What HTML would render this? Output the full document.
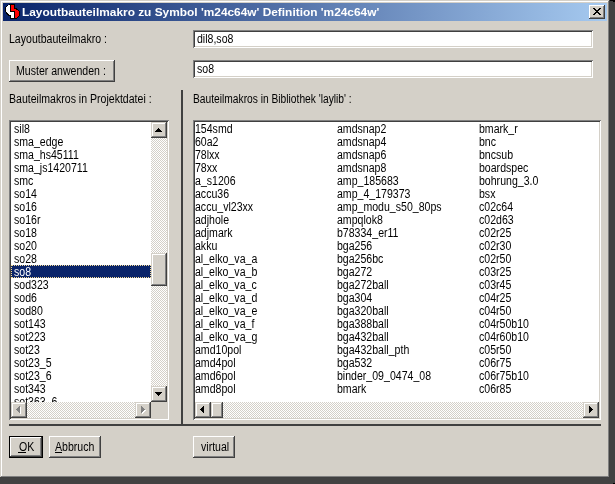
<!DOCTYPE html><html><head><meta charset="utf-8"><style>html,body{margin:0;padding:0;}body{width:615px;height:484px;overflow:hidden;position:relative;background:#424242;}</style></head><body><div style="position:absolute;left:0;top:0;width:610px;height:478px;background:#d4d0c8;box-shadow:inset -1px -1px #404040,inset 1px 1px #d4d0c8,inset -2px -2px #808080,inset 2px 2px #fff;"></div><div style="position:absolute;left:610px;top:0px;width:5px;height:1px;background:#000"></div><div style="position:absolute;left:613px;top:1px;width:2px;height:1px;background:#000"></div><div style="position:absolute;left:613px;top:483px;width:2px;height:1px;background:#000"></div><div style="position:absolute;left:3px;top:3px;width:604px;height:18px;background:linear-gradient(to right,#0a246a,#a6caf0)"></div><svg style="position:absolute;left:4px;top:3px" width="16" height="16" shape-rendering="crispEdges" fill="#000"><rect x="5" y="1" width="6" height="1"/><rect x="3" y="2" width="1" height="1"/><rect x="6" y="2" width="1" height="1"/><rect x="10" y="2" width="1" height="1"/><rect x="2" y="3" width="1" height="1"/><rect x="6" y="3" width="1" height="1"/><rect x="10" y="3" width="1" height="1"/><rect x="1" y="4" width="1" height="1"/><rect x="6" y="4" width="1" height="1"/><rect x="10" y="4" width="1" height="1"/><rect x="1" y="5" width="1" height="1"/><rect x="6" y="5" width="1" height="1"/><rect x="10" y="5" width="3" height="1"/><rect x="1" y="6" width="1" height="1"/><rect x="6" y="6" width="1" height="1"/><rect x="12" y="6" width="2" height="1"/><rect x="1" y="7" width="1" height="1"/><rect x="6" y="7" width="1" height="1"/><rect x="14" y="7" width="1" height="1"/><rect x="1" y="8" width="1" height="1"/><rect x="6" y="8" width="5" height="1"/><rect x="15" y="8" width="1" height="1"/><rect x="2" y="9" width="1" height="1"/><rect x="10" y="9" width="1" height="1"/><rect x="15" y="9" width="1" height="1"/><rect x="2" y="10" width="2" height="1"/><rect x="10" y="10" width="1" height="1"/><rect x="15" y="10" width="1" height="1"/><rect x="3" y="11" width="2" height="1"/><rect x="10" y="11" width="1" height="1"/><rect x="15" y="11" width="1" height="1"/><rect x="4" y="12" width="3" height="1"/><rect x="10" y="12" width="1" height="1"/><rect x="15" y="12" width="1" height="1"/><rect x="6" y="13" width="1" height="1"/><rect x="10" y="13" width="1" height="1"/><rect x="14" y="13" width="1" height="1"/><rect x="6" y="14" width="1" height="1"/><rect x="10" y="14" width="1" height="1"/><rect x="13" y="14" width="1" height="1"/><rect x="6" y="15" width="7" height="1"/></svg><svg style="position:absolute;left:4px;top:3px" width="16" height="16" shape-rendering="crispEdges" fill="#fff"><rect x="4" y="2" width="2" height="1"/><rect x="3" y="3" width="3" height="1"/><rect x="2" y="4" width="4" height="1"/><rect x="2" y="5" width="4" height="1"/><rect x="2" y="6" width="4" height="1"/><rect x="2" y="7" width="4" height="1"/><rect x="2" y="8" width="4" height="1"/><rect x="3" y="9" width="7" height="1"/><rect x="4" y="10" width="6" height="1"/><rect x="5" y="11" width="5" height="1"/><rect x="7" y="12" width="3" height="1"/><rect x="7" y="13" width="3" height="1"/><rect x="7" y="14" width="3" height="1"/></svg><svg style="position:absolute;left:4px;top:3px" width="16" height="16" shape-rendering="crispEdges" fill="#f00"><rect x="7" y="2" width="3" height="1"/><rect x="7" y="3" width="3" height="1"/><rect x="7" y="4" width="3" height="1"/><rect x="7" y="5" width="3" height="1"/><rect x="7" y="6" width="5" height="1"/><rect x="7" y="7" width="7" height="1"/><rect x="11" y="8" width="4" height="1"/><rect x="11" y="9" width="4" height="1"/><rect x="11" y="10" width="4" height="1"/><rect x="11" y="11" width="4" height="1"/><rect x="11" y="12" width="4" height="1"/><rect x="11" y="13" width="3" height="1"/><rect x="11" y="14" width="2" height="1"/></svg><div style="position:absolute;left:22px;top:4.69px;font:bold 11px/15px 'Liberation Sans', sans-serif;color:#fff;letter-spacing:0px;white-space:pre;transform:scaleX(1.08);transform-origin:0 0;filter:grayscale(1);">Layoutbauteilmakro zu Symbol 'm24c64w' Definition 'm24c64w'</div><div style="position:absolute;left:589px;top:5px;width:16px;height:14px;background:#d4d0c8;box-shadow:inset -1px -1px #404040,inset 1px 1px #fff,inset -2px -2px #808080,inset 2px 2px #d4d0c8;"></div><svg style="position:absolute;left:593px;top:8px" width="8" height="7" shape-rendering="crispEdges" fill="#000"><rect x="0" y="0" width="1" height="1"/><rect x="1" y="0" width="1" height="1"/><rect x="6" y="0" width="1" height="1"/><rect x="7" y="0" width="1" height="1"/><rect x="1" y="1" width="1" height="1"/><rect x="2" y="1" width="1" height="1"/><rect x="5" y="1" width="1" height="1"/><rect x="6" y="1" width="1" height="1"/><rect x="2" y="2" width="1" height="1"/><rect x="3" y="2" width="1" height="1"/><rect x="4" y="2" width="1" height="1"/><rect x="5" y="2" width="1" height="1"/><rect x="3" y="3" width="1" height="1"/><rect x="4" y="3" width="1" height="1"/><rect x="2" y="4" width="1" height="1"/><rect x="3" y="4" width="1" height="1"/><rect x="4" y="4" width="1" height="1"/><rect x="5" y="4" width="1" height="1"/><rect x="1" y="5" width="1" height="1"/><rect x="2" y="5" width="1" height="1"/><rect x="5" y="5" width="1" height="1"/><rect x="6" y="5" width="1" height="1"/><rect x="0" y="6" width="1" height="1"/><rect x="1" y="6" width="1" height="1"/><rect x="6" y="6" width="1" height="1"/><rect x="7" y="6" width="1" height="1"/></svg><div style="position:absolute;left:9px;top:32.34px;font:normal 12px/15px 'Liberation Sans', sans-serif;color:#000;letter-spacing:0px;white-space:pre;transform:scaleX(0.88);transform-origin:0 0;filter:grayscale(1);">Layoutbauteilmakro :</div><div style="position:absolute;left:193px;top:30px;width:400px;height:18px;background:#fff;box-shadow:inset 1px 1px #808080,inset -1px -1px #fff,inset 2px 2px #404040,inset -2px -2px #d4d0c8;"></div><div style="position:absolute;left:197px;top:32.34px;font:normal 12px/15px 'Liberation Sans', sans-serif;color:#000;letter-spacing:0px;white-space:pre;transform:scaleX(0.88);transform-origin:0 0;filter:grayscale(1);">dil8,so8</div><div style="position:absolute;left:9px;top:60px;width:106px;height:22px;background:#d4d0c8;box-shadow:inset -1px -1px #404040,inset 1px 1px #fff,inset -2px -2px #808080,inset 2px 2px #d4d0c8;"></div><div style="position:absolute;left:16px;top:64.34px;font:normal 12px/15px 'Liberation Sans', sans-serif;color:#000;letter-spacing:0px;white-space:pre;transform:scaleX(0.88);transform-origin:0 0;filter:grayscale(1);">Muster anwenden :</div><div style="position:absolute;left:193px;top:60px;width:400px;height:18px;background:#fff;box-shadow:inset 1px 1px #808080,inset -1px -1px #fff,inset 2px 2px #404040,inset -2px -2px #d4d0c8;"></div><div style="position:absolute;left:197px;top:62.34px;font:normal 12px/15px 'Liberation Sans', sans-serif;color:#000;letter-spacing:0px;white-space:pre;transform:scaleX(0.88);transform-origin:0 0;filter:grayscale(1);">so8</div><div style="position:absolute;left:9px;top:92.34px;font:normal 12px/15px 'Liberation Sans', sans-serif;color:#000;letter-spacing:0px;white-space:pre;transform:scaleX(0.88);transform-origin:0 0;filter:grayscale(1);">Bauteilmakros in Projektdatei :</div><div style="position:absolute;left:193px;top:92.34px;font:normal 12px/15px 'Liberation Sans', sans-serif;color:#000;letter-spacing:0px;white-space:pre;transform:scaleX(0.853);transform-origin:0 0;filter:grayscale(1);">Bauteilmakros in Bibliothek 'laylib' :</div><div style="position:absolute;left:181px;top:90px;width:2px;height:336px;background:#404040"></div><div style="position:absolute;left:9px;top:424px;width:592px;height:2px;background:#404040"></div><div style="position:absolute;left:9px;top:120px;width:160px;height:300px;background:#fff;box-shadow:inset 1px 1px #808080,inset -1px -1px #fff,inset 2px 2px #404040,inset -2px -2px #d4d0c8;"></div><div style="position:absolute;left:11px;top:122px;width:140px;height:280px;overflow:hidden;"><div style="position:absolute;left:3px;top:0.34px;font:normal 12px/15px 'Liberation Sans', sans-serif;color:#000;letter-spacing:0px;white-space:pre;transform:scaleX(0.88);transform-origin:0 0;filter:grayscale(1);">sil8</div><div style="position:absolute;left:3px;top:13.34px;font:normal 12px/15px 'Liberation Sans', sans-serif;color:#000;letter-spacing:0px;white-space:pre;transform:scaleX(0.88);transform-origin:0 0;filter:grayscale(1);">sma<span style="position:relative;top:-1px">_</span>edge</div><div style="position:absolute;left:3px;top:26.34px;font:normal 12px/15px 'Liberation Sans', sans-serif;color:#000;letter-spacing:0px;white-space:pre;transform:scaleX(0.88);transform-origin:0 0;filter:grayscale(1);">sma<span style="position:relative;top:-1px">_</span>hs45111</div><div style="position:absolute;left:3px;top:39.34px;font:normal 12px/15px 'Liberation Sans', sans-serif;color:#000;letter-spacing:0px;white-space:pre;transform:scaleX(0.88);transform-origin:0 0;filter:grayscale(1);">sma<span style="position:relative;top:-1px">_</span>js1420711</div><div style="position:absolute;left:3px;top:52.34px;font:normal 12px/15px 'Liberation Sans', sans-serif;color:#000;letter-spacing:0px;white-space:pre;transform:scaleX(0.88);transform-origin:0 0;filter:grayscale(1);">smc</div><div style="position:absolute;left:3px;top:65.34px;font:normal 12px/15px 'Liberation Sans', sans-serif;color:#000;letter-spacing:0px;white-space:pre;transform:scaleX(0.88);transform-origin:0 0;filter:grayscale(1);">so14</div><div style="position:absolute;left:3px;top:78.34px;font:normal 12px/15px 'Liberation Sans', sans-serif;color:#000;letter-spacing:0px;white-space:pre;transform:scaleX(0.88);transform-origin:0 0;filter:grayscale(1);">so16</div><div style="position:absolute;left:3px;top:91.34px;font:normal 12px/15px 'Liberation Sans', sans-serif;color:#000;letter-spacing:0px;white-space:pre;transform:scaleX(0.88);transform-origin:0 0;filter:grayscale(1);">so16r</div><div style="position:absolute;left:3px;top:104.34px;font:normal 12px/15px 'Liberation Sans', sans-serif;color:#000;letter-spacing:0px;white-space:pre;transform:scaleX(0.88);transform-origin:0 0;filter:grayscale(1);">so18</div><div style="position:absolute;left:3px;top:117.34px;font:normal 12px/15px 'Liberation Sans', sans-serif;color:#000;letter-spacing:0px;white-space:pre;transform:scaleX(0.88);transform-origin:0 0;filter:grayscale(1);">so20</div><div style="position:absolute;left:3px;top:130.34px;font:normal 12px/15px 'Liberation Sans', sans-serif;color:#000;letter-spacing:0px;white-space:pre;transform:scaleX(0.88);transform-origin:0 0;filter:grayscale(1);">so28</div><div style="position:absolute;left:0;top:143px;width:140px;height:13px;background:#0a246a;"></div><div style="position:absolute;left:0;top:143px;width:138px;height:11px;border:1px dotted #f5db95;"></div><div style="position:absolute;left:3px;top:143.34px;font:normal 12px/15px 'Liberation Sans', sans-serif;color:#fff;letter-spacing:0px;white-space:pre;transform:scaleX(0.88);transform-origin:0 0;filter:grayscale(1);">so8</div><div style="position:absolute;left:3px;top:156.34px;font:normal 12px/15px 'Liberation Sans', sans-serif;color:#000;letter-spacing:0px;white-space:pre;transform:scaleX(0.88);transform-origin:0 0;filter:grayscale(1);">sod323</div><div style="position:absolute;left:3px;top:169.34px;font:normal 12px/15px 'Liberation Sans', sans-serif;color:#000;letter-spacing:0px;white-space:pre;transform:scaleX(0.88);transform-origin:0 0;filter:grayscale(1);">sod6</div><div style="position:absolute;left:3px;top:182.34px;font:normal 12px/15px 'Liberation Sans', sans-serif;color:#000;letter-spacing:0px;white-space:pre;transform:scaleX(0.88);transform-origin:0 0;filter:grayscale(1);">sod80</div><div style="position:absolute;left:3px;top:195.34px;font:normal 12px/15px 'Liberation Sans', sans-serif;color:#000;letter-spacing:0px;white-space:pre;transform:scaleX(0.88);transform-origin:0 0;filter:grayscale(1);">sot143</div><div style="position:absolute;left:3px;top:208.34px;font:normal 12px/15px 'Liberation Sans', sans-serif;color:#000;letter-spacing:0px;white-space:pre;transform:scaleX(0.88);transform-origin:0 0;filter:grayscale(1);">sot223</div><div style="position:absolute;left:3px;top:221.34px;font:normal 12px/15px 'Liberation Sans', sans-serif;color:#000;letter-spacing:0px;white-space:pre;transform:scaleX(0.88);transform-origin:0 0;filter:grayscale(1);">sot23</div><div style="position:absolute;left:3px;top:234.34px;font:normal 12px/15px 'Liberation Sans', sans-serif;color:#000;letter-spacing:0px;white-space:pre;transform:scaleX(0.88);transform-origin:0 0;filter:grayscale(1);">sot23<span style="position:relative;top:-1px">_</span>5</div><div style="position:absolute;left:3px;top:247.34px;font:normal 12px/15px 'Liberation Sans', sans-serif;color:#000;letter-spacing:0px;white-space:pre;transform:scaleX(0.88);transform-origin:0 0;filter:grayscale(1);">sot23<span style="position:relative;top:-1px">_</span>6</div><div style="position:absolute;left:3px;top:260.34px;font:normal 12px/15px 'Liberation Sans', sans-serif;color:#000;letter-spacing:0px;white-space:pre;transform:scaleX(0.88);transform-origin:0 0;filter:grayscale(1);">sot343</div><div style="position:absolute;left:3px;top:273.34px;font:normal 12px/15px 'Liberation Sans', sans-serif;color:#000;letter-spacing:0px;white-space:pre;transform:scaleX(0.88);transform-origin:0 0;filter:grayscale(1);">sot363<span style="position:relative;top:-1px">_</span>6</div></div><div style="position:absolute;left:151px;top:138px;width:16px;height:248px;background-color:#fff;background-image:repeating-conic-gradient(#d4d0c8 0 25%,#fff 0 50%);background-size:2px 2px;"></div><div style="position:absolute;left:151px;top:122px;width:16px;height:16px;background:#d4d0c8;box-shadow:inset -1px -1px #404040,inset 1px 1px #d4d0c8,inset -2px -2px #808080,inset 2px 2px #fff;"></div><svg style="position:absolute;left:155px;top:128px" width="7" height="4" shape-rendering="crispEdges" fill="#000"><rect x="3" y="0" width="1" height="1"/><rect x="2" y="1" width="3" height="1"/><rect x="1" y="2" width="5" height="1"/><rect x="0" y="3" width="7" height="1"/></svg><div style="position:absolute;left:151px;top:253px;width:16px;height:33px;background:#d4d0c8;box-shadow:inset -1px -1px #404040,inset 1px 1px #d4d0c8,inset -2px -2px #808080,inset 2px 2px #fff;"></div><div style="position:absolute;left:151px;top:386px;width:16px;height:16px;background:#d4d0c8;box-shadow:inset -1px -1px #404040,inset 1px 1px #d4d0c8,inset -2px -2px #808080,inset 2px 2px #fff;"></div><svg style="position:absolute;left:155px;top:392px" width="7" height="4" shape-rendering="crispEdges" fill="#000"><rect x="0" y="0" width="7" height="1"/><rect x="1" y="1" width="5" height="1"/><rect x="2" y="2" width="3" height="1"/><rect x="3" y="3" width="1" height="1"/></svg><div style="position:absolute;left:27px;top:402px;width:108px;height:16px;background-color:#fff;background-image:repeating-conic-gradient(#d4d0c8 0 25%,#fff 0 50%);background-size:2px 2px;"></div><div style="position:absolute;left:11px;top:402px;width:16px;height:16px;background:#d4d0c8;box-shadow:inset -1px -1px #404040,inset 1px 1px #d4d0c8,inset -2px -2px #808080,inset 2px 2px #fff;"></div><svg style="position:absolute;left:17px;top:407px" width="4" height="7" shape-rendering="crispEdges" fill="#fff"><rect x="0" y="3" width="1" height="1"/><rect x="1" y="2" width="1" height="3"/><rect x="2" y="1" width="1" height="5"/><rect x="3" y="0" width="1" height="7"/></svg><svg style="position:absolute;left:16px;top:406px" width="4" height="7" shape-rendering="crispEdges" fill="#808080"><rect x="0" y="3" width="1" height="1"/><rect x="1" y="2" width="1" height="3"/><rect x="2" y="1" width="1" height="5"/><rect x="3" y="0" width="1" height="7"/></svg><div style="position:absolute;left:135px;top:402px;width:16px;height:16px;background:#d4d0c8;box-shadow:inset -1px -1px #404040,inset 1px 1px #d4d0c8,inset -2px -2px #808080,inset 2px 2px #fff;"></div><svg style="position:absolute;left:142px;top:407px" width="4" height="7" shape-rendering="crispEdges" fill="#fff"><rect x="0" y="0" width="1" height="7"/><rect x="1" y="1" width="1" height="5"/><rect x="2" y="2" width="1" height="3"/><rect x="3" y="3" width="1" height="1"/></svg><svg style="position:absolute;left:141px;top:406px" width="4" height="7" shape-rendering="crispEdges" fill="#808080"><rect x="0" y="0" width="1" height="7"/><rect x="1" y="1" width="1" height="5"/><rect x="2" y="2" width="1" height="3"/><rect x="3" y="3" width="1" height="1"/></svg><div style="position:absolute;left:151px;top:402px;width:16px;height:16px;background:#d4d0c8"></div><div style="position:absolute;left:193px;top:120px;width:408px;height:300px;background:#fff;box-shadow:inset 1px 1px #808080,inset -1px -1px #fff,inset 2px 2px #404040,inset -2px -2px #d4d0c8;"></div><div style="position:absolute;left:195px;top:122px;width:404px;height:280px;overflow:hidden;"><div style="position:absolute;left:0px;top:0.34px;font:normal 12px/15px 'Liberation Sans', sans-serif;color:#000;letter-spacing:0px;white-space:pre;transform:scaleX(0.88);transform-origin:0 0;filter:grayscale(1);">154smd</div><div style="position:absolute;left:0px;top:13.34px;font:normal 12px/15px 'Liberation Sans', sans-serif;color:#000;letter-spacing:0px;white-space:pre;transform:scaleX(0.88);transform-origin:0 0;filter:grayscale(1);">60a2</div><div style="position:absolute;left:0px;top:26.34px;font:normal 12px/15px 'Liberation Sans', sans-serif;color:#000;letter-spacing:0px;white-space:pre;transform:scaleX(0.88);transform-origin:0 0;filter:grayscale(1);">78lxx</div><div style="position:absolute;left:0px;top:39.34px;font:normal 12px/15px 'Liberation Sans', sans-serif;color:#000;letter-spacing:0px;white-space:pre;transform:scaleX(0.88);transform-origin:0 0;filter:grayscale(1);">78xx</div><div style="position:absolute;left:0px;top:52.34px;font:normal 12px/15px 'Liberation Sans', sans-serif;color:#000;letter-spacing:0px;white-space:pre;transform:scaleX(0.88);transform-origin:0 0;filter:grayscale(1);">a<span style="position:relative;top:-1px">_</span>s1206</div><div style="position:absolute;left:0px;top:65.34px;font:normal 12px/15px 'Liberation Sans', sans-serif;color:#000;letter-spacing:0px;white-space:pre;transform:scaleX(0.88);transform-origin:0 0;filter:grayscale(1);">accu36</div><div style="position:absolute;left:0px;top:78.34px;font:normal 12px/15px 'Liberation Sans', sans-serif;color:#000;letter-spacing:0px;white-space:pre;transform:scaleX(0.88);transform-origin:0 0;filter:grayscale(1);">accu<span style="position:relative;top:-1px">_</span>vl23xx</div><div style="position:absolute;left:0px;top:91.34px;font:normal 12px/15px 'Liberation Sans', sans-serif;color:#000;letter-spacing:0px;white-space:pre;transform:scaleX(0.88);transform-origin:0 0;filter:grayscale(1);">adjhole</div><div style="position:absolute;left:0px;top:104.34px;font:normal 12px/15px 'Liberation Sans', sans-serif;color:#000;letter-spacing:0px;white-space:pre;transform:scaleX(0.88);transform-origin:0 0;filter:grayscale(1);">adjmark</div><div style="position:absolute;left:0px;top:117.34px;font:normal 12px/15px 'Liberation Sans', sans-serif;color:#000;letter-spacing:0px;white-space:pre;transform:scaleX(0.88);transform-origin:0 0;filter:grayscale(1);">akku</div><div style="position:absolute;left:0px;top:130.34px;font:normal 12px/15px 'Liberation Sans', sans-serif;color:#000;letter-spacing:0px;white-space:pre;transform:scaleX(0.88);transform-origin:0 0;filter:grayscale(1);">al<span style="position:relative;top:-1px">_</span>elko<span style="position:relative;top:-1px">_</span>va<span style="position:relative;top:-1px">_</span>a</div><div style="position:absolute;left:0px;top:143.34px;font:normal 12px/15px 'Liberation Sans', sans-serif;color:#000;letter-spacing:0px;white-space:pre;transform:scaleX(0.88);transform-origin:0 0;filter:grayscale(1);">al<span style="position:relative;top:-1px">_</span>elko<span style="position:relative;top:-1px">_</span>va<span style="position:relative;top:-1px">_</span>b</div><div style="position:absolute;left:0px;top:156.34px;font:normal 12px/15px 'Liberation Sans', sans-serif;color:#000;letter-spacing:0px;white-space:pre;transform:scaleX(0.88);transform-origin:0 0;filter:grayscale(1);">al<span style="position:relative;top:-1px">_</span>elko<span style="position:relative;top:-1px">_</span>va<span style="position:relative;top:-1px">_</span>c</div><div style="position:absolute;left:0px;top:169.34px;font:normal 12px/15px 'Liberation Sans', sans-serif;color:#000;letter-spacing:0px;white-space:pre;transform:scaleX(0.88);transform-origin:0 0;filter:grayscale(1);">al<span style="position:relative;top:-1px">_</span>elko<span style="position:relative;top:-1px">_</span>va<span style="position:relative;top:-1px">_</span>d</div><div style="position:absolute;left:0px;top:182.34px;font:normal 12px/15px 'Liberation Sans', sans-serif;color:#000;letter-spacing:0px;white-space:pre;transform:scaleX(0.88);transform-origin:0 0;filter:grayscale(1);">al<span style="position:relative;top:-1px">_</span>elko<span style="position:relative;top:-1px">_</span>va<span style="position:relative;top:-1px">_</span>e</div><div style="position:absolute;left:0px;top:195.34px;font:normal 12px/15px 'Liberation Sans', sans-serif;color:#000;letter-spacing:0px;white-space:pre;transform:scaleX(0.88);transform-origin:0 0;filter:grayscale(1);">al<span style="position:relative;top:-1px">_</span>elko<span style="position:relative;top:-1px">_</span>va<span style="position:relative;top:-1px">_</span>f</div><div style="position:absolute;left:0px;top:208.34px;font:normal 12px/15px 'Liberation Sans', sans-serif;color:#000;letter-spacing:0px;white-space:pre;transform:scaleX(0.88);transform-origin:0 0;filter:grayscale(1);">al<span style="position:relative;top:-1px">_</span>elko<span style="position:relative;top:-1px">_</span>va<span style="position:relative;top:-1px">_</span>g</div><div style="position:absolute;left:0px;top:221.34px;font:normal 12px/15px 'Liberation Sans', sans-serif;color:#000;letter-spacing:0px;white-space:pre;transform:scaleX(0.88);transform-origin:0 0;filter:grayscale(1);">amd10pol</div><div style="position:absolute;left:0px;top:234.34px;font:normal 12px/15px 'Liberation Sans', sans-serif;color:#000;letter-spacing:0px;white-space:pre;transform:scaleX(0.88);transform-origin:0 0;filter:grayscale(1);">amd4pol</div><div style="position:absolute;left:0px;top:247.34px;font:normal 12px/15px 'Liberation Sans', sans-serif;color:#000;letter-spacing:0px;white-space:pre;transform:scaleX(0.88);transform-origin:0 0;filter:grayscale(1);">amd6pol</div><div style="position:absolute;left:0px;top:260.34px;font:normal 12px/15px 'Liberation Sans', sans-serif;color:#000;letter-spacing:0px;white-space:pre;transform:scaleX(0.88);transform-origin:0 0;filter:grayscale(1);">amd8pol</div><div style="position:absolute;left:142px;top:0.34px;font:normal 12px/15px 'Liberation Sans', sans-serif;color:#000;letter-spacing:0px;white-space:pre;transform:scaleX(0.88);transform-origin:0 0;filter:grayscale(1);">amdsnap2</div><div style="position:absolute;left:142px;top:13.34px;font:normal 12px/15px 'Liberation Sans', sans-serif;color:#000;letter-spacing:0px;white-space:pre;transform:scaleX(0.88);transform-origin:0 0;filter:grayscale(1);">amdsnap4</div><div style="position:absolute;left:142px;top:26.34px;font:normal 12px/15px 'Liberation Sans', sans-serif;color:#000;letter-spacing:0px;white-space:pre;transform:scaleX(0.88);transform-origin:0 0;filter:grayscale(1);">amdsnap6</div><div style="position:absolute;left:142px;top:39.34px;font:normal 12px/15px 'Liberation Sans', sans-serif;color:#000;letter-spacing:0px;white-space:pre;transform:scaleX(0.88);transform-origin:0 0;filter:grayscale(1);">amdsnap8</div><div style="position:absolute;left:142px;top:52.34px;font:normal 12px/15px 'Liberation Sans', sans-serif;color:#000;letter-spacing:0px;white-space:pre;transform:scaleX(0.88);transform-origin:0 0;filter:grayscale(1);">amp<span style="position:relative;top:-1px">_</span>185683</div><div style="position:absolute;left:142px;top:65.34px;font:normal 12px/15px 'Liberation Sans', sans-serif;color:#000;letter-spacing:0px;white-space:pre;transform:scaleX(0.88);transform-origin:0 0;filter:grayscale(1);">amp<span style="position:relative;top:-1px">_</span>4<span style="position:relative;top:-1px">_</span>179373</div><div style="position:absolute;left:142px;top:78.34px;font:normal 12px/15px 'Liberation Sans', sans-serif;color:#000;letter-spacing:0px;white-space:pre;transform:scaleX(0.88);transform-origin:0 0;filter:grayscale(1);">amp<span style="position:relative;top:-1px">_</span>modu<span style="position:relative;top:-1px">_</span>s50<span style="position:relative;top:-1px">_</span>80ps</div><div style="position:absolute;left:142px;top:91.34px;font:normal 12px/15px 'Liberation Sans', sans-serif;color:#000;letter-spacing:0px;white-space:pre;transform:scaleX(0.88);transform-origin:0 0;filter:grayscale(1);">ampqlok8</div><div style="position:absolute;left:142px;top:104.34px;font:normal 12px/15px 'Liberation Sans', sans-serif;color:#000;letter-spacing:0px;white-space:pre;transform:scaleX(0.88);transform-origin:0 0;filter:grayscale(1);">b78334<span style="position:relative;top:-1px">_</span>er11</div><div style="position:absolute;left:142px;top:117.34px;font:normal 12px/15px 'Liberation Sans', sans-serif;color:#000;letter-spacing:0px;white-space:pre;transform:scaleX(0.88);transform-origin:0 0;filter:grayscale(1);">bga256</div><div style="position:absolute;left:142px;top:130.34px;font:normal 12px/15px 'Liberation Sans', sans-serif;color:#000;letter-spacing:0px;white-space:pre;transform:scaleX(0.88);transform-origin:0 0;filter:grayscale(1);">bga256bc</div><div style="position:absolute;left:142px;top:143.34px;font:normal 12px/15px 'Liberation Sans', sans-serif;color:#000;letter-spacing:0px;white-space:pre;transform:scaleX(0.88);transform-origin:0 0;filter:grayscale(1);">bga272</div><div style="position:absolute;left:142px;top:156.34px;font:normal 12px/15px 'Liberation Sans', sans-serif;color:#000;letter-spacing:0px;white-space:pre;transform:scaleX(0.88);transform-origin:0 0;filter:grayscale(1);">bga272ball</div><div style="position:absolute;left:142px;top:169.34px;font:normal 12px/15px 'Liberation Sans', sans-serif;color:#000;letter-spacing:0px;white-space:pre;transform:scaleX(0.88);transform-origin:0 0;filter:grayscale(1);">bga304</div><div style="position:absolute;left:142px;top:182.34px;font:normal 12px/15px 'Liberation Sans', sans-serif;color:#000;letter-spacing:0px;white-space:pre;transform:scaleX(0.88);transform-origin:0 0;filter:grayscale(1);">bga320ball</div><div style="position:absolute;left:142px;top:195.34px;font:normal 12px/15px 'Liberation Sans', sans-serif;color:#000;letter-spacing:0px;white-space:pre;transform:scaleX(0.88);transform-origin:0 0;filter:grayscale(1);">bga388ball</div><div style="position:absolute;left:142px;top:208.34px;font:normal 12px/15px 'Liberation Sans', sans-serif;color:#000;letter-spacing:0px;white-space:pre;transform:scaleX(0.88);transform-origin:0 0;filter:grayscale(1);">bga432ball</div><div style="position:absolute;left:142px;top:221.34px;font:normal 12px/15px 'Liberation Sans', sans-serif;color:#000;letter-spacing:0px;white-space:pre;transform:scaleX(0.88);transform-origin:0 0;filter:grayscale(1);">bga432ball<span style="position:relative;top:-1px">_</span>pth</div><div style="position:absolute;left:142px;top:234.34px;font:normal 12px/15px 'Liberation Sans', sans-serif;color:#000;letter-spacing:0px;white-space:pre;transform:scaleX(0.88);transform-origin:0 0;filter:grayscale(1);">bga532</div><div style="position:absolute;left:142px;top:247.34px;font:normal 12px/15px 'Liberation Sans', sans-serif;color:#000;letter-spacing:0px;white-space:pre;transform:scaleX(0.88);transform-origin:0 0;filter:grayscale(1);">binder<span style="position:relative;top:-1px">_</span>09<span style="position:relative;top:-1px">_</span>0474<span style="position:relative;top:-1px">_</span>08</div><div style="position:absolute;left:142px;top:260.34px;font:normal 12px/15px 'Liberation Sans', sans-serif;color:#000;letter-spacing:0px;white-space:pre;transform:scaleX(0.88);transform-origin:0 0;filter:grayscale(1);">bmark</div><div style="position:absolute;left:284px;top:0.34px;font:normal 12px/15px 'Liberation Sans', sans-serif;color:#000;letter-spacing:0px;white-space:pre;transform:scaleX(0.88);transform-origin:0 0;filter:grayscale(1);">bmark<span style="position:relative;top:-1px">_</span>r</div><div style="position:absolute;left:284px;top:13.34px;font:normal 12px/15px 'Liberation Sans', sans-serif;color:#000;letter-spacing:0px;white-space:pre;transform:scaleX(0.88);transform-origin:0 0;filter:grayscale(1);">bnc</div><div style="position:absolute;left:284px;top:26.34px;font:normal 12px/15px 'Liberation Sans', sans-serif;color:#000;letter-spacing:0px;white-space:pre;transform:scaleX(0.88);transform-origin:0 0;filter:grayscale(1);">bncsub</div><div style="position:absolute;left:284px;top:39.34px;font:normal 12px/15px 'Liberation Sans', sans-serif;color:#000;letter-spacing:0px;white-space:pre;transform:scaleX(0.88);transform-origin:0 0;filter:grayscale(1);">boardspec</div><div style="position:absolute;left:284px;top:52.34px;font:normal 12px/15px 'Liberation Sans', sans-serif;color:#000;letter-spacing:0px;white-space:pre;transform:scaleX(0.88);transform-origin:0 0;filter:grayscale(1);">bohrung<span style="position:relative;top:-1px">_</span>3.0</div><div style="position:absolute;left:284px;top:65.34px;font:normal 12px/15px 'Liberation Sans', sans-serif;color:#000;letter-spacing:0px;white-space:pre;transform:scaleX(0.88);transform-origin:0 0;filter:grayscale(1);">bsx</div><div style="position:absolute;left:284px;top:78.34px;font:normal 12px/15px 'Liberation Sans', sans-serif;color:#000;letter-spacing:0px;white-space:pre;transform:scaleX(0.88);transform-origin:0 0;filter:grayscale(1);">c02c64</div><div style="position:absolute;left:284px;top:91.34px;font:normal 12px/15px 'Liberation Sans', sans-serif;color:#000;letter-spacing:0px;white-space:pre;transform:scaleX(0.88);transform-origin:0 0;filter:grayscale(1);">c02d63</div><div style="position:absolute;left:284px;top:104.34px;font:normal 12px/15px 'Liberation Sans', sans-serif;color:#000;letter-spacing:0px;white-space:pre;transform:scaleX(0.88);transform-origin:0 0;filter:grayscale(1);">c02r25</div><div style="position:absolute;left:284px;top:117.34px;font:normal 12px/15px 'Liberation Sans', sans-serif;color:#000;letter-spacing:0px;white-space:pre;transform:scaleX(0.88);transform-origin:0 0;filter:grayscale(1);">c02r30</div><div style="position:absolute;left:284px;top:130.34px;font:normal 12px/15px 'Liberation Sans', sans-serif;color:#000;letter-spacing:0px;white-space:pre;transform:scaleX(0.88);transform-origin:0 0;filter:grayscale(1);">c02r50</div><div style="position:absolute;left:284px;top:143.34px;font:normal 12px/15px 'Liberation Sans', sans-serif;color:#000;letter-spacing:0px;white-space:pre;transform:scaleX(0.88);transform-origin:0 0;filter:grayscale(1);">c03r25</div><div style="position:absolute;left:284px;top:156.34px;font:normal 12px/15px 'Liberation Sans', sans-serif;color:#000;letter-spacing:0px;white-space:pre;transform:scaleX(0.88);transform-origin:0 0;filter:grayscale(1);">c03r45</div><div style="position:absolute;left:284px;top:169.34px;font:normal 12px/15px 'Liberation Sans', sans-serif;color:#000;letter-spacing:0px;white-space:pre;transform:scaleX(0.88);transform-origin:0 0;filter:grayscale(1);">c04r25</div><div style="position:absolute;left:284px;top:182.34px;font:normal 12px/15px 'Liberation Sans', sans-serif;color:#000;letter-spacing:0px;white-space:pre;transform:scaleX(0.88);transform-origin:0 0;filter:grayscale(1);">c04r50</div><div style="position:absolute;left:284px;top:195.34px;font:normal 12px/15px 'Liberation Sans', sans-serif;color:#000;letter-spacing:0px;white-space:pre;transform:scaleX(0.88);transform-origin:0 0;filter:grayscale(1);">c04r50b10</div><div style="position:absolute;left:284px;top:208.34px;font:normal 12px/15px 'Liberation Sans', sans-serif;color:#000;letter-spacing:0px;white-space:pre;transform:scaleX(0.88);transform-origin:0 0;filter:grayscale(1);">c04r60b10</div><div style="position:absolute;left:284px;top:221.34px;font:normal 12px/15px 'Liberation Sans', sans-serif;color:#000;letter-spacing:0px;white-space:pre;transform:scaleX(0.88);transform-origin:0 0;filter:grayscale(1);">c05r50</div><div style="position:absolute;left:284px;top:234.34px;font:normal 12px/15px 'Liberation Sans', sans-serif;color:#000;letter-spacing:0px;white-space:pre;transform:scaleX(0.88);transform-origin:0 0;filter:grayscale(1);">c06r75</div><div style="position:absolute;left:284px;top:247.34px;font:normal 12px/15px 'Liberation Sans', sans-serif;color:#000;letter-spacing:0px;white-space:pre;transform:scaleX(0.88);transform-origin:0 0;filter:grayscale(1);">c06r75b10</div><div style="position:absolute;left:284px;top:260.34px;font:normal 12px/15px 'Liberation Sans', sans-serif;color:#000;letter-spacing:0px;white-space:pre;transform:scaleX(0.88);transform-origin:0 0;filter:grayscale(1);">c06r85</div></div><div style="position:absolute;left:195px;top:402px;width:404px;height:16px;background-color:#fff;background-image:repeating-conic-gradient(#d4d0c8 0 25%,#fff 0 50%);background-size:2px 2px;"></div><div style="position:absolute;left:195px;top:402px;width:16px;height:16px;background:#d4d0c8;box-shadow:inset -1px -1px #404040,inset 1px 1px #d4d0c8,inset -2px -2px #808080,inset 2px 2px #fff;"></div><svg style="position:absolute;left:200px;top:406px" width="4" height="7" shape-rendering="crispEdges" fill="#000"><rect x="0" y="3" width="1" height="1"/><rect x="1" y="2" width="1" height="3"/><rect x="2" y="1" width="1" height="5"/><rect x="3" y="0" width="1" height="7"/></svg><div style="position:absolute;left:211px;top:402px;width:12px;height:16px;background:#d4d0c8;box-shadow:inset -1px -1px #404040,inset 1px 1px #d4d0c8,inset -2px -2px #808080,inset 2px 2px #fff;"></div><div style="position:absolute;left:583px;top:402px;width:16px;height:16px;background:#d4d0c8;box-shadow:inset -1px -1px #404040,inset 1px 1px #d4d0c8,inset -2px -2px #808080,inset 2px 2px #fff;"></div><svg style="position:absolute;left:589px;top:406px" width="4" height="7" shape-rendering="crispEdges" fill="#000"><rect x="0" y="0" width="1" height="7"/><rect x="1" y="1" width="1" height="5"/><rect x="2" y="2" width="1" height="3"/><rect x="3" y="3" width="1" height="1"/></svg><div style="position:absolute;left:9px;top:436px;width:34px;height:22px;background:#000"></div><div style="position:absolute;left:10px;top:437px;width:32px;height:20px;background:#d4d0c8;box-shadow:inset -1px -1px #404040,inset 1px 1px #fff,inset -2px -2px #808080,inset 2px 2px #d4d0c8;"></div><div style="position:absolute;left:19px;top:440.34px;font:normal 12px/15px 'Liberation Sans', sans-serif;color:#000;letter-spacing:0px;white-space:pre;transform:scaleX(0.88);transform-origin:0 0;filter:grayscale(1);">OK</div><div style="position:absolute;left:18px;top:452px;width:8px;height:1px;background:#000"></div><div style="position:absolute;left:49px;top:436px;width:52px;height:22px;background:#d4d0c8;box-shadow:inset -1px -1px #404040,inset 1px 1px #fff,inset -2px -2px #808080,inset 2px 2px #d4d0c8;"></div><div style="position:absolute;left:55px;top:440.34px;font:normal 12px/15px 'Liberation Sans', sans-serif;color:#000;letter-spacing:0px;white-space:pre;transform:scaleX(0.88);transform-origin:0 0;filter:grayscale(1);">Abbruch</div><div style="position:absolute;left:55px;top:452px;width:7px;height:1px;background:#000"></div><div style="position:absolute;left:193px;top:436px;width:42px;height:22px;background:#d4d0c8;box-shadow:inset -1px -1px #404040,inset 1px 1px #fff,inset -2px -2px #808080,inset 2px 2px #d4d0c8;"></div><div style="position:absolute;left:201px;top:440.34px;font:normal 12px/15px 'Liberation Sans', sans-serif;color:#000;letter-spacing:0px;white-space:pre;transform:scaleX(0.88);transform-origin:0 0;filter:grayscale(1);">virtual</div></body></html>
